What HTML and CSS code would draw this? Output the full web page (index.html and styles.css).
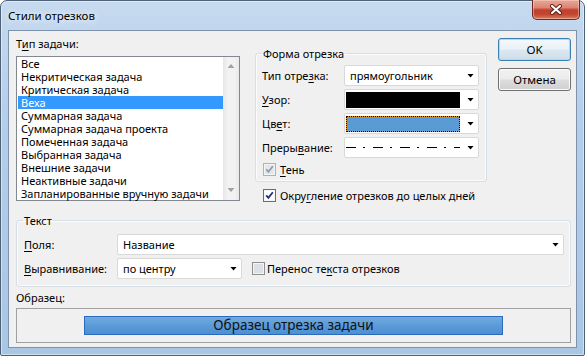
FILE: index.html
```html
<!DOCTYPE html>
<html lang="ru">
<head>
    <meta charset="UTF-8">
    <meta name="viewport" content="width=device-width, initial-scale=1.0">
    <title>Стили отрезков</title>
    <link rel="stylesheet" href="styles.css">
</head>
<body>
    <div class="window">
        <div class="titlebar">
            <span class="title">Стили отрезков</span>
            <button class="close" title="Закрыть">
                <svg width="14" height="11" viewBox="0 0 14 11">
                    <path d="M3 2 L11 9 M11 2 L3 9" stroke="#5a1d16" stroke-width="4" stroke-linecap="round"/>
                    <path d="M3 2 L11 9 M11 2 L3 9" stroke="#fff" stroke-width="2.2" stroke-linecap="round"/>
                </svg>
            </button>
        </div>

        <div class="client">
            <div class="top">
                <div class="types">
                    <div class="caption">Т<u>и</u>п задачи:</div>
                    <div class="listbox">
                        <ul class="items">
                            <li>Все</li>
                            <li>Некритическая задача</li>
                            <li>Критическая задача</li>
                            <li class="selected">Веха</li>
                            <li>Суммарная задача</li>
                            <li>Суммарная задача проекта</li>
                            <li>Помеченная задача</li>
                            <li>Выбранная задача</li>
                            <li>Внешние задачи</li>
                            <li>Неактивные задачи</li>
                            <li>Запланированные вручную задачи</li>
                        </ul>
                        <div class="scrollbar">
                            <span class="arrow up"></span>
                            <span class="arrow down"></span>
                        </div>
                    </div>
                </div>

                <div class="shape">
                    <fieldset class="group shape-group">
                        <legend>Форма отрезка</legend>
                        <div class="row">
                            <span class="row-label">Тип отре<u>з</u>ка:</span>
                            <div class="combo">
                                <span class="value">прямоугольник</span>
                                <span class="drop"></span>
                            </div>
                        </div>
                        <div class="row">
                            <span class="row-label"><u>У</u>зор:</span>
                            <div class="combo">
                                <span class="swatch black"></span>
                                <span class="drop"></span>
                            </div>
                        </div>
                        <div class="row">
                            <span class="row-label">Цв<u>е</u>т:</span>
                            <div class="combo">
                                <span class="swatch blue"></span>
                                <span class="drop"></span>
                            </div>
                        </div>
                        <div class="row">
                            <span class="row-label">Преры<u>в</u>ание:</span>
                            <div class="combo">
                                <span class="swatch dashdot"></span>
                                <span class="drop"></span>
                            </div>
                        </div>
                        <label class="check disabled">
                            <svg class="box" width="13" height="13" viewBox="0 0 13 13">
                                <rect x="0.5" y="0.5" width="12" height="12" fill="#f4f4f4" stroke="#b1b1b1"/>
                                <rect x="2" y="2" width="9" height="9" fill="#e6e6e6"/>
                                <path d="M3.2 6.3 L5.4 8.8 L9.8 3.2" fill="none" stroke="#8a9ab8" stroke-width="1.7"/>
                            </svg>
                            <span><u>Т</u>ень</span>
                        </label>
                    </fieldset>
                    <label class="check rounding">
                        <svg class="box" width="13" height="13" viewBox="0 0 13 13">
                            <rect x="0.5" y="0.5" width="12" height="12" fill="#f6f6f6" stroke="#5b6f8f"/>
                            <rect x="2" y="2" width="9" height="9" fill="#fff"/>
                            <path d="M3.2 6.3 L5.4 8.8 L9.8 3.2" fill="none" stroke="#1b2f72" stroke-width="1.8"/>
                        </svg>
                        <span>Окру<u>г</u>ление отрезков до целых дней</span>
                    </label>
                </div>

                <div class="buttons">
                    <button class="btn default">OK</button>
                    <button class="btn">Отмена</button>
                </div>
            </div>

            <fieldset class="group text-group">
                <legend>Текст</legend>
                <div class="row">
                    <span class="row-label"><u>П</u>оля:</span>
                    <div class="combo wide">
                        <span class="value">Название</span>
                        <span class="drop"></span>
                    </div>
                </div>
                <div class="row">
                    <span class="row-label"><u>В</u>ыравнивание:</span>
                    <div class="combo align">
                        <span class="value">по центру</span>
                        <span class="drop"></span>
                    </div>
                    <label class="check wrap">
                        <svg class="box" width="13" height="13" viewBox="0 0 13 13">
                            <rect x="0.5" y="0.5" width="12" height="12" fill="#f4f4f4" stroke="#8e8f8f"/>
                            <rect x="2" y="2" width="9" height="9" fill="#dcdfe3"/>
                        </svg>
                        <span>Перенос те<u>к</u>ста отрезков</span>
                    </label>
                </div>
            </fieldset>

            <div class="sample-label">Образец:</div>
            <div class="sample">
                <div class="sample-bar">Образец отрезка задачи</div>
            </div>
        </div>
    </div>
</body>
</html>
```

FILE: styles.css
```css
body{
    margin: 0;
    font-family: "Noto Sans", "Open Sans", sans-serif;
    font-size: 11px;
    color: #000;
}
u{
    text-decoration-thickness: 1px;
    text-underline-offset: 2px;
}
.window{
    box-sizing: border-box;
    width: 585px;
    height: 356px;
    border: 1px solid #4f6177;
    border-radius: 7px 7px 2px 2px;
    background: linear-gradient(180deg, #c6daef 0%, #b4cdea 35%, #a9c6e5 100%);
    box-shadow: inset 0 0 0 1px rgba(255,255,255,0.45);
    display: flex;
    flex-direction: column;
}
.titlebar{
    height: 29px;
    display: flex;
    align-items: flex-start;
    padding-left: 7px;
}
.title{
    padding-top: 7px;
    line-height: 15px;
    font-size: 11.5px;
    text-shadow: 0 0 6px rgba(255,255,255,0.9), 0 0 10px rgba(255,255,255,0.7);
}
.close{
    margin-left: auto;
    margin-right: 4px;
    margin-top: -1px;
    width: 48px;
    height: 20px;
    padding: 0;
    border: 1px solid #6b2a22;
    border-top: none;
    border-radius: 0 0 5px 5px;
    background: linear-gradient(180deg, #e9a797 0%, #dc8672 40%, #c2402f 52%, #c2462f 75%, #d97d5e 100%);
    box-shadow: inset 0 0 0 1px rgba(255,220,210,0.45);
    display: flex;
    align-items: center;
    justify-content: center;
}
.client{
    box-sizing: border-box;
    width: 569px;
    height: 318px;
    margin-left: 7px;
    border: 1px solid #7f92ab;
    background: #f0f0f0;
    padding: 7px 5px 0 7px;
}
.top{
    display: flex;
    align-items: flex-start;
}
.types{
    width: 224px;
}
.caption{
    line-height: 12px;
    margin-bottom: 6px;
}
.listbox{
    box-sizing: border-box;
    height: 145px;
    border: 1px solid #828790;
    background: #fff;
    display: flex;
}
.items{
    list-style: none;
    margin: 0;
    padding: 0 0 0 1px;
    flex: 1;
}
.items li{
    height: 13px;
    line-height: 13px;
    padding-left: 3px;
    white-space: nowrap;
}
.items li.selected{
    background: #3399ff;
    color: #fff;
}
.scrollbar{
    width: 16px;
    background: linear-gradient(90deg, #e6e6e6, #f2f2f2 30%, #f2f2f2 70%, #e9e9e9);
    display: flex;
    flex-direction: column;
    justify-content: space-between;
    align-items: center;
    padding: 7px 0 8px;
    box-sizing: border-box;
}
.arrow{
    width: 7px;
    height: 4px;
    background: #a2a2a2;
}
.arrow.up{
    clip-path: polygon(50% 0, 100% 100%, 0 100%);
}
.arrow.down{
    clip-path: polygon(0 0, 100% 0, 50% 100%);
}
.shape{
    width: 232px;
    margin-left: 15px;
}
.buttons{
    width: 73px;
    margin-left: 11px;
    display: flex;
    flex-direction: column;
    gap: 7px;
}
.btn{
    height: 23px;
    padding: 0;
    font-family: inherit;
    font-size: 11.5px;
    color: #000;
    border: 1px solid #707070;
    border-radius: 3px;
    background: linear-gradient(180deg, #f2f2f2 0%, #ebebeb 48%, #dddddd 52%, #cfcfcf 100%);
    box-shadow: inset 0 0 0 1px #fbfbfb;
}
.btn.default{
    border-color: #3c7fb1;
    box-shadow: inset 0 0 0 1px #a9dcf6;
    background: linear-gradient(180deg, #f4f9fc 0%, #e9f2f8 48%, #dbe8f1 52%, #cfdde8 100%);
}
.group{
    margin: 0;
    border: 1px solid #d5dfe5;
    border-radius: 3px;
    box-shadow: inset 0 0 0 1px #fbfbfb;
}
.group legend{
    line-height: 13px;
    padding: 0 1px;
}
.shape-group{
    margin-top: 9px;
    padding: 5px 7px 4px 6px;
}
.row{
    display: flex;
    align-items: center;
    height: 21px;
    margin-bottom: 3px;
}
.row-label{
    width: 82px;
    flex: none;
}
.combo{
    box-sizing: border-box;
    width: 135px;
    height: 21px;
    border: 1px solid #d9d9d9;
    border-radius: 2px;
    background: #fff;
    display: flex;
    align-items: center;
    padding-left: 5px;
}
.combo .value{
    flex: 1;
    white-space: nowrap;
}
.drop{
    width: 7px;
    height: 4px;
    margin-left: auto;
    margin-right: 4px;
    background: #000;
    clip-path: polygon(0 0, 100% 0, 50% 100%);
}
.swatch{
    box-sizing: border-box;
    width: 114px;
    height: 16px;
    margin-left: -4px;
}
.swatch.black{
    background: #000;
}
.swatch.blue{
    border: 1px dotted #000;
    background: linear-gradient(#5b9bd5, #5b9bd5) padding-box, linear-gradient(#e39b2e, #e39b2e) border-box;
}
.swatch.dashdot{
    height: 1px;
    background: repeating-linear-gradient(90deg, #000 0 10px, transparent 10px 17px, #000 17px 19px, transparent 19px 27px);
}
.check{
    display: flex;
    align-items: center;
    height: 16px;
}
.check .box{
    flex: none;
    margin-right: 4px;
}
.check.disabled{
    margin-left: 1px;
}
.check.rounding{
    margin-left: 8px;
    margin-top: 5px;
}
.text-group{
    margin-top: 11px;
    padding: 7px 6px 4px 7px;
}
.text-group legend{
    margin-left: -1px;
}
.text-group .row-label{
    width: 93px;
}
.combo.wide{
    width: 447px;
}
.combo.align{
    width: 125px;
}
.check.wrap{
    margin-left: 10px;
}
.check.wrap .box{
    margin-right: 2px;
}
.sample-label{
    line-height: 12px;
    margin-top: 5px;
}
.sample{
    box-sizing: border-box;
    height: 35px;
    margin-top: 4px;
    border: 1px solid #a0a0a0;
    display: flex;
    align-items: center;
    justify-content: center;
}
.sample-bar{
    box-sizing: border-box;
    width: 419px;
    height: 19px;
    border: 1px solid #2a6bbf;
    background: linear-gradient(180deg, #72abe0 0%, #5b9bd7 50%, #4e8fd2 100%);
    text-align: center;
    line-height: 17px;
    font-size: 13.5px;
    color: #111;
}
```
